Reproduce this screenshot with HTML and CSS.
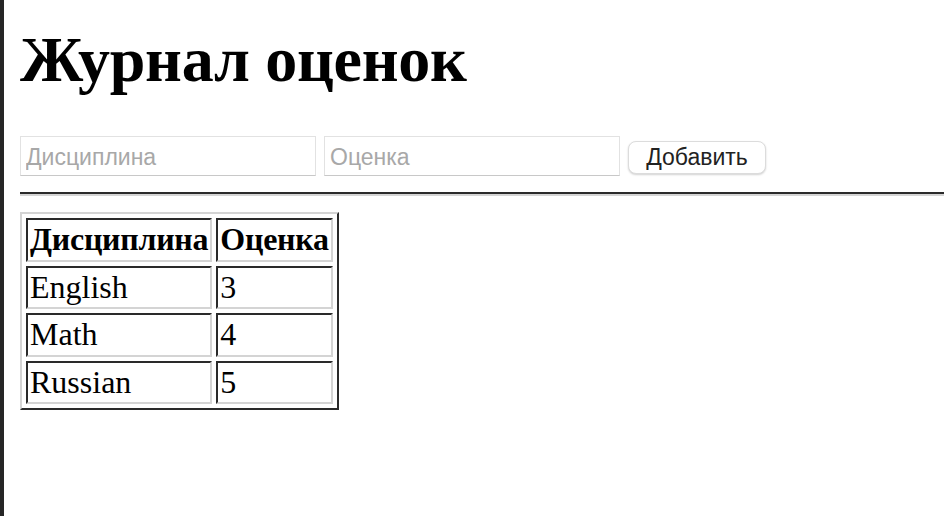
FILE: index.html
```html
<!DOCTYPE html>
<html lang="ru">
<head>
<meta charset="utf-8">
<title>Журнал оценок</title>
<link rel="stylesheet" href="styles.css">
</head>
<body>
<h1 class="title">Журнал оценок</h1>
<form class="entry">
  <input class="field" type="text" placeholder="Дисциплина">
  <input class="field" type="text" placeholder="Оценка">
  <button class="add" type="button">Добавить</button>
</form>
<hr class="rule">
<table class="grades">
  <tr><th>Дисциплина</th><th>Оценка</th></tr>
  <tr><td>English</td><td>3</td></tr>
  <tr><td>Math</td><td>4</td></tr>
  <tr><td>Russian</td><td>5</td></tr>
</table>
</body>
</html>
```

FILE: styles.css
```css
html, body {
  margin: 0;
  height: 100%;
}
body {
  box-sizing: border-box;
  border-left: 4px solid #262626;
  padding: 0 0 0 16px;
  background: #fff;
  color: #000;
  font-family: "Liberation Serif", "Times New Roman", serif;
}
.title {
  font-size: 64px;
  line-height: 74px;
  font-weight: bold;
  letter-spacing: -0.3px;
  margin: 23px 0 0 0;
}
.entry {
  display: flex;
  align-items: center;
  gap: 8px;
  margin: 39px 0 0 0;
}
.field {
  box-sizing: border-box;
  width: 296px;
  height: 40px;
  margin: 0;
  padding: 2px 5px 0 5px;
  border: 1px solid #e2e2e2;
  border-bottom-color: #c8c8c8;
  border-radius: 0;
  background: #fff;
  font-family: "Liberation Sans", Arial, sans-serif;
  font-size: 23px;
  color: #000;
  outline: none;
}
.field::placeholder {
  color: #a8a8a8;
}
.add {
  box-sizing: border-box;
  height: 33px;
  width: 138px;
  margin: 2px 0 0 0;
  padding: 1px 0 0 0;
  border: 1px solid #dcdcdc;
  border-radius: 8px;
  background: #fff;
  box-shadow: 0 1px 2px rgba(0,0,0,0.18);
  font-family: "Liberation Sans", Arial, sans-serif;
  font-size: 23px;
  color: #222;
}
.rule {
  margin: 16px 0 0 0;
  height: 0;
  border: 0;
  border-top: 2px solid #2a2a2a;
  border-bottom: 2px solid #d4d4d4;
}
.grades {
  margin-top: 16px;
  border-collapse: separate;
  border-spacing: 4px;
  border: 2px solid;
  border-color: #d4d4d4 #2a2a2a #2a2a2a #d4d4d4;
  font-size: 32px;
}
.grades th,
.grades td {
  padding: 2px;
  line-height: 35.5px;
  border: 2px solid;
  border-color: #2a2a2a #d4d4d4 #d4d4d4 #2a2a2a;
  text-align: left;
}
.grades th {
  font-weight: bold;
  letter-spacing: -0.25px;
}
```
